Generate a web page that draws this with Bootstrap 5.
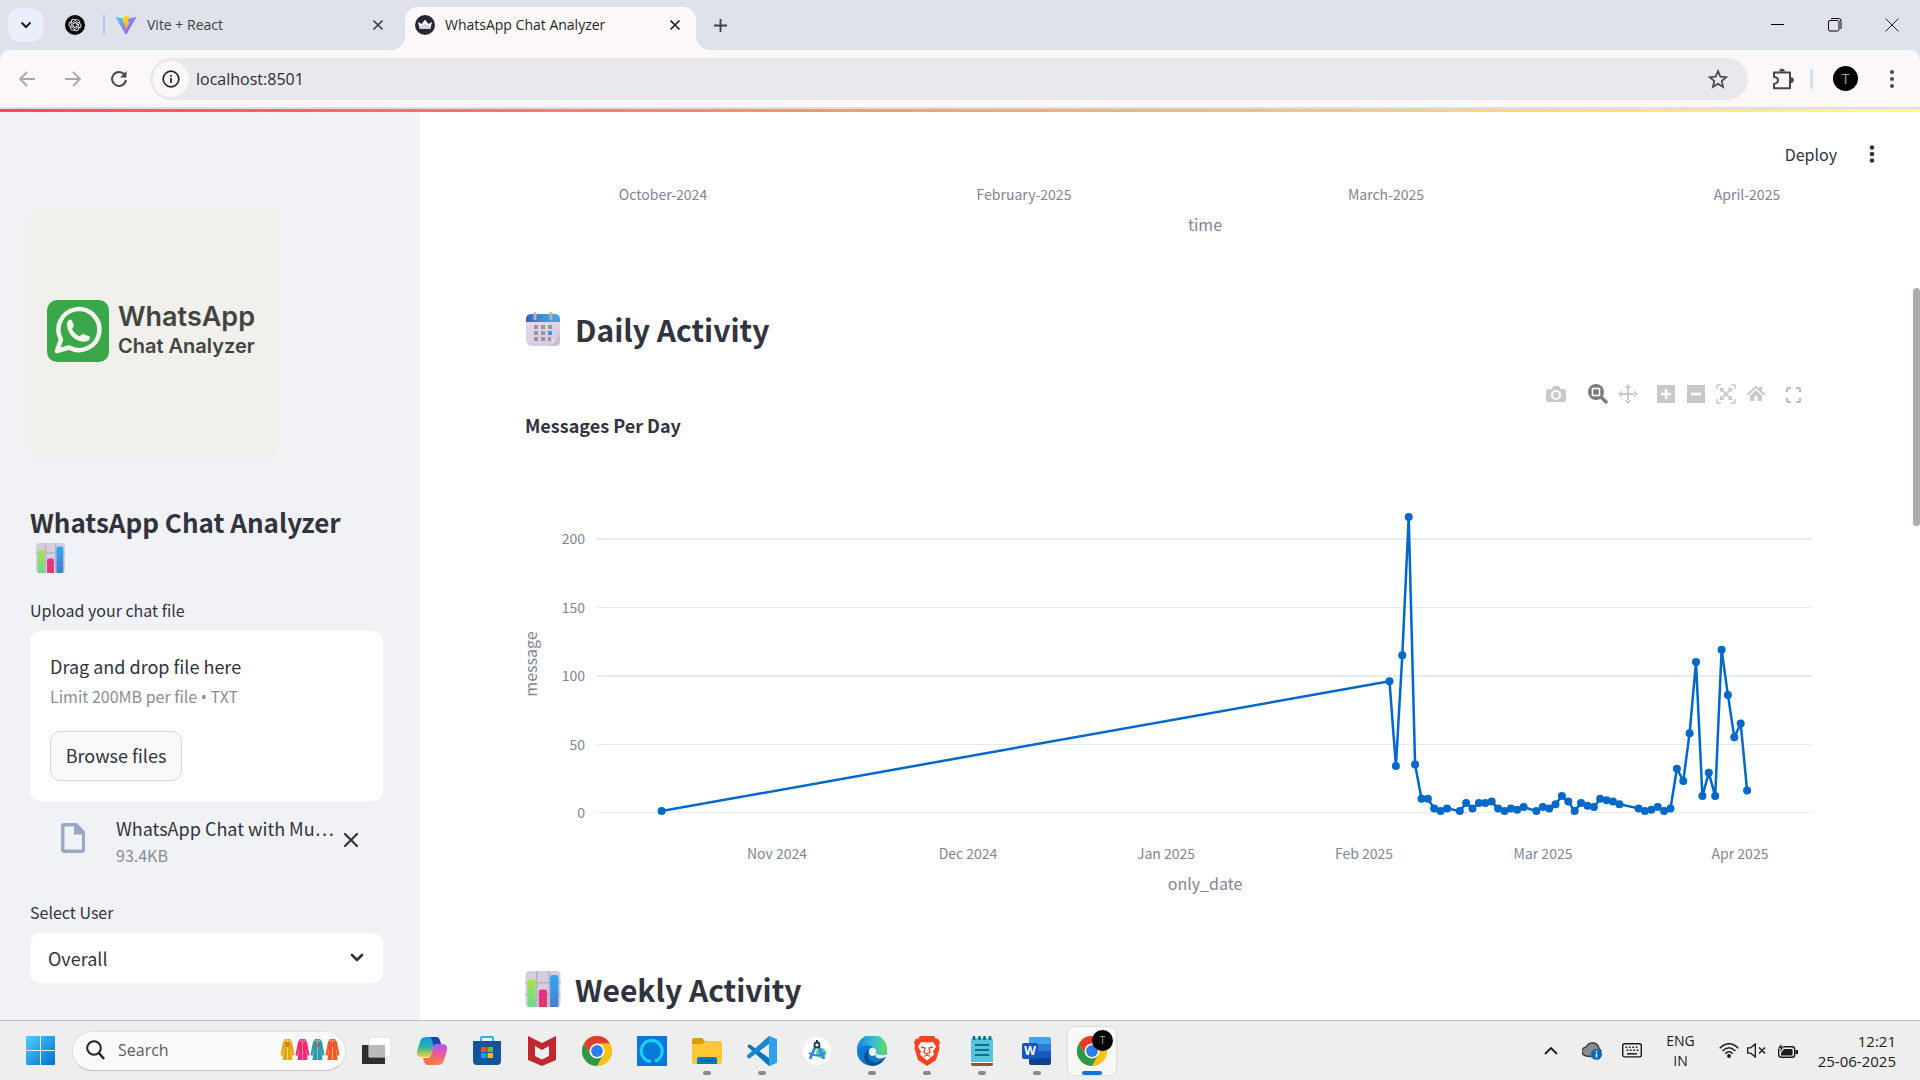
<!DOCTYPE html>
<html lang="en">
<head>
<meta charset="utf-8">
<meta name="viewport" content="width=device-width, initial-scale=1">
<title>WhatsApp Chat Analyzer</title>
<link href="https://cdn.jsdelivr.net/npm/bootstrap@5.3.0/dist/css/bootstrap.min.css" rel="stylesheet">
<style>
  :root { --ink:#31333f; --muted:#808495; --ui:"Open Sans","Noto Sans",sans-serif; --app:"Noto Sans CJK SC","Noto Sans",sans-serif; }
  body { font-family:var(--app); color:var(--ink); background:#fff; }
  svg { display:block; flex:none; }
  button { padding:0; border:0; background:none; color:inherit; }
  .tabstrip { height:50px; background:#dfe2eb; font:14px/20px var(--ui); color:#1f1f1f; padding-left:8px; }
  .tab-menu { width:35px; height:34px; border-radius:12px; background:#ebeffd; }
  .pin { margin-left:22px; }
  .tab-rule { width:2px; height:20px; background:#b6c6ea; margin:0 10px 0 18px; }
  .idle-tab { width:269px; color:#3c4043; margin-right:21px; gap:10px; }
  .live-tab { width:291px; height:43px; margin-top:7px; background:#fcf8fa; border-radius:13px 13px 0 0; padding:0 15px 7px 10px; position:relative; gap:10px; }
  .live-tab::before, .live-tab::after { content:""; position:absolute; bottom:0; width:14px; height:14px; }
  .live-tab::before { left:-14px; background:radial-gradient(circle at 0 0,transparent 14px,#fcf8fa 14px); }
  .live-tab::after { right:-14px; background:radial-gradient(circle at 100% 0,transparent 14px,#fcf8fa 14px); }
  .new-tab { margin-left:18px; }
  .win-ctl { gap:43px; padding-right:21px; }
  .toolbar-wrap { background:#dfe2eb; }
  .tools { height:57px; background:#fcf8fa; border-radius:10px 10px 0 0; padding:0 18px; color:#45474a; }
  .tool-rule { width:3px; height:20px; background:#d3e0fb; border-radius:2px; }
  .omnibox { height:42px; border-radius:21px; background:#e9e8ed; padding:0 20px 0 3px; gap:5px; margin-left:22px; }
  .omnibox input { border:0; background:none; outline:0; font:16px/24px var(--ui); color:#2b2c2f; min-width:0; }
  .site-info { width:36px; height:36px; border-radius:50%; background:#fcf8fa; }
  .avatar-dot { width:25px; height:25px; border-radius:50%; background:#000; color:#b5a27c; font:14px/25px var(--ui); text-align:center; }
  .chrome-edge { height:2px; background:#dedde1; }
  .decoration { height:3px; background:linear-gradient(90deg,#ff4b4b,#fffd80); }
  .side { width:420px; background:#f0f2f6; padding:97px 37px 0 30px; }
  .logo-card { width:250px; height:250px; border-radius:10px; background:#f1f0ec; }
  .logo-card text { font-family:Inter,sans-serif; font-weight:600; fill:#42443f; }
  .side-title { font-size:26px; line-height:36px; font-weight:600; margin:45px 0 25px; }
  .side-title svg { margin:3px 0 0 6px; }
  .field-label { font-size:16px; line-height:24px; margin-bottom:9px; display:block; }
  .drop { background:#fff; border-radius:10px; padding:19px 20px 20px; }
  .t-main { font-size:18px; line-height:32px; }
  .t-sub { font-size:16px; line-height:28px; color:#8b8c94; }
  .bullet { font-family:"Noto Sans",sans-serif; }
  .browse { width:132px; height:50px; border:1px solid #d3d4d9; border-radius:10px; background:#f9f9fb; font-size:18px; line-height:26px; padding-bottom:2px; margin-top:20px; }
  .file-row { padding:14px 24px 0 30px; margin-bottom:31px; gap:8px; }
  .file-row .file-text { padding-left:22px; min-width:0; }
  .file-row .t-main, .file-row .t-sub { line-height:27px; }
  .user-select { height:50px; border:0; border-radius:10px; font-size:18px; line-height:28px; padding:0 48px 1px 18px; color:var(--ink); background-color:#fff; background-size:16px 16px; background-position:right 18px center;
    background-image:url("data:image/svg+xml,%3csvg xmlns='http://www.w3.org/2000/svg' viewBox='0 0 16 16'%3e%3cpath fill='none' stroke='%2331333F' stroke-width='2.6' stroke-linecap='round' stroke-linejoin='round' d='m3 5 5 5 5-5'/%3e%3c/svg%3e"); }
  .page-main { padding:0 105px; background:#fff; }
  .app-head { height:70px; padding-top:13px; margin-right:-65px; font-size:16px; gap:27px; }
  .chart { width:100%; height:auto; overflow:visible; }
  .chart text { font-family:var(--app); fill:var(--muted); font-size:14px; }
  .chart .axis-name { font-size:16px; }
  .sect { font-size:30px; line-height:40px; font-weight:600; gap:14px; margin:37px 0 35px; }
  .sect.next { margin-top:59px; }
  .modebar { gap:10px; padding-right:13px; color:#c9c9c9; }
  .chart-title { font-size:18px; line-height:24px; font-weight:700; margin:9px 0 43px; }
  .thumb { position:absolute; right:0; top:176px; width:7px; height:238px; border-radius:4px; background:#acadb3; }
  .taskbar { height:60px; border-top:1px solid #bcbdbe; background:#eee; font:14px/20px var(--ui); color:#1b1b1b; padding:0 24px 0 26px; }
  .task-search { width:274px; height:40px; border-radius:20px; background:#fafafa; border:1px solid #e0e0e0; border-bottom-color:#c4c4c4; margin-left:17px; padding:0 5px 2px 13px; gap:11px; }
  .task-search input { border:0; background:none; outline:0; font:16px/20px var(--ui); color:#5c5c5c; min-width:0; }
  .task-search input::placeholder { color:#5c5c5c; opacity:1; }
  .apps { margin-left:7px; gap:7px; }
  .app-btn { width:48px; height:48px; border-radius:6px; position:relative; display:flex; align-items:center; justify-content:center; }
  .app-btn.run::after { content:""; position:absolute; left:20px; bottom:0; width:8px; height:4px; border-radius:2px; background:#8a8a8a; }
  .app-btn.now { background:#f8f8f8; box-shadow:0 0 2px #bbb; }
  .app-btn.now::after { left:14px; width:20px; background:#0c78d4; }
  .app-btn .avatar-dot { position:absolute; right:3px; top:3px; width:21px; height:21px; font-size:10px; line-height:20px; }
  .tray { gap:20px; }
  .clock { font-size:15px; }
</style>
<script src="https://cdn.jsdelivr.net/npm/bootstrap@5.3.0/dist/js/bootstrap.bundle.min.js"></script>
</head>
<body class="d-flex flex-column vh-100 overflow-hidden">

<svg width="0" height="0" class="position-absolute" aria-hidden="true">
  <defs>
    <linearGradient id="gGreen" x2="0" y2="1"><stop stop-color="#a9e34b"/><stop offset="1" stop-color="#6ad98d"/></linearGradient>
    <linearGradient id="gPink" x2="0" y2="1"><stop stop-color="#e9308c"/><stop offset="1" stop-color="#dc3a63"/></linearGradient>
    <linearGradient id="gBlue" x2="0" y2="1"><stop stop-color="#35a7f5"/><stop offset="1" stop-color="#437fce"/></linearGradient>
    <linearGradient id="gCal"><stop stop-color="#3c5fc4"/><stop offset=".5" stop-color="#3c94dc"/><stop offset="1" stop-color="#4da3e2"/></linearGradient>
    <linearGradient id="gPaper" x2=".4" y2="1"><stop stop-color="#e6dfec"/><stop offset="1" stop-color="#d6cbe0"/></linearGradient>
    <symbol id="bars" viewBox="0 0 34 35">
      <rect width="34" height="35" rx="4" fill="#d5cedd"/>
      <path d="M11 0v35M23 0v35M0 11.500h34M0 23h34" stroke="#b9b0c3" stroke-width="1.500"/>
      <path d="M2 35V10q0-2 2-2h4q2 0 2 2v25z" fill="url(#gGreen)"/>
      <path d="M13 35V20q0-2 2-2h4q2 0 2 2v15z" fill="url(#gPink)"/>
      <path d="M24 35V6q0-2 2-2h4q2 0 2 2v29z" fill="url(#gBlue)"/>
    </symbol>
    <symbol id="chromeLogo" viewBox="0 0 30 30">
      <circle cx="15" cy="15" r="15" fill="#fbc116"/>
      <path d="M2 7.500A15 15 0 0 1 28 7.500L15 8 8.500 18.800z" fill="#e33b2e"/>
      <path d="M2 7.500A15 15 0 0 0 15 30l6.500-11.200L15 22 8.500 18.700z" fill="#2a9a48"/>
      <path d="M15 7.500h13A15 15 0 0 1 15 30l6.500-11.200z" fill="#fbc116"/>
      <circle cx="15" cy="15" r="7.500" fill="#fff"/><circle cx="15" cy="15" r="5.900" fill="#2f7de9"/>
    </symbol>
    <symbol id="cross" viewBox="0 0 12 12"><path d="m1.500 1.500 9 9m0-9-9 9" stroke="currentColor" stroke-width="1.700" fill="none"/></symbol>
    <symbol id="robe" viewBox="0 0 15 22"><path d="M5 0h5l2 3 2.500 13-2 1L11 9l1.500 12h-10L4 9l-1.500 8-2-1L3 3z"/><path d="M7.500 0v21M5 1l2.500 4L10 1" stroke="#fff" stroke-opacity=".45" fill="none"/><path d="M5.500 3h4l-1 5h-2z" fill="#e8443a" fill-opacity=".7"/></symbol>
  </defs>
</svg>

<header>
  <div class="tabstrip d-flex align-items-center">
    <button class="tab-menu d-flex align-items-center justify-content-center" aria-label="Search tabs"><svg width="12" height="8" viewBox="0 0 12 8"><path d="m1.500 1.500 4.500 4.500 4.500-4.500" fill="none" stroke="#1f1f1f" stroke-width="2"/></svg></button>
    <svg class="pin" width="20" height="20" viewBox="0 0 20 20"><circle cx="10" cy="10" r="10" fill="#000"/><g fill="none" stroke="#fff" stroke-width=".9"><path id="petal" d="M8 11.200V6.800l3-1.700a2.400 2.400 0 0 1 3.400 3.200"/><use href="#petal" transform="rotate(60 10 10)"/><use href="#petal" transform="rotate(120 10 10)"/><use href="#petal" transform="rotate(180 10 10)"/><use href="#petal" transform="rotate(240 10 10)"/><use href="#petal" transform="rotate(300 10 10)"/></g></svg>
    <span class="tab-rule"></span>
    <div class="idle-tab d-flex align-items-center">
      <svg width="22" height="20" viewBox="0 0 22 20"><defs><linearGradient id="v1" x2="1" y2="1"><stop stop-color="#41d1ff"/><stop offset="1" stop-color="#bd34fe"/></linearGradient><linearGradient id="v2" x2="0" y2="1"><stop stop-color="#ffdd35"/><stop offset="1" stop-color="#ffa800"/></linearGradient></defs><path d="M.5 2 11 20 21.500 2 11 4z" fill="url(#v1)"/><path d="M14.500.3 8.200 1.500 7.800 8.700l2.300-.4-.6 3.200 1.700-.5-1.300 5.500 5.300-9.500-2.600.4z" fill="url(#v2)"/></svg>
      <span class="flex-grow-1">Vite + React</span>
      <button aria-label="Close tab"><svg width="12" height="12"><use href="#cross"/></svg></button>
    </div>
    <div class="live-tab d-flex align-items-center">
      <svg width="20" height="20" viewBox="0 0 20 20"><circle cx="10" cy="10" r="10" fill="#262730"/><path d="m3 7 3.600 2L10 4.700 13.400 9 17 7l-1.800 7H4.800z" fill="#fff"/><path d="M4.400 12 10 8.500l5.600 3.500-.4 2H4.800z" fill="#d4d4d6"/></svg>
      <span class="flex-grow-1">WhatsApp Chat Analyzer</span>
      <button aria-label="Close tab"><svg width="12" height="12"><use href="#cross"/></svg></button>
    </div>
    <button class="new-tab" aria-label="New tab"><svg width="13" height="13" viewBox="0 0 13 13"><path d="M6.500 0v13M0 6.500h13" stroke="#3c4043" stroke-width="1.800"/></svg></button>
    <div class="win-ctl ms-auto d-flex align-items-center">
      <button aria-label="Minimize"><svg width="14" height="14"><path d="M0 6.500h13" stroke="#000"/></svg></button>
      <button aria-label="Restore"><svg width="14" height="14" fill="none" stroke="#000"><rect x=".5" y="2.500" width="10.500" height="10.500" rx="1.500"/><path d="M3 .5h7.500q2.500 0 2.500 2.500v8"/></svg></button>
      <button aria-label="Close"><svg width="14" height="14"><path d="m.5.5 13 13m0-13-13 13" stroke="#222"/></svg></button>
    </div>
  </div>
  <div class="toolbar-wrap">
    <div class="tools d-flex align-items-center">
      <button aria-label="Back"><svg width="18" height="16" viewBox="0 0 18 16" fill="none" stroke="#a9a8ab" stroke-width="1.800"><path d="M17 8H2M9 1 2 8l7 7"/></svg></button>
      <button class="ms-4" aria-label="Forward"><svg class="ms-1" width="18" height="16" viewBox="0 0 18 16" fill="none" stroke="#a9a8ab" stroke-width="1.800"><path d="M1 8h15M9 1l7 7-7 7"/></svg></button>
      <button class="ms-4" aria-label="Reload"><svg class="ms-1" width="18" height="18" viewBox="0 0 18 18"><path d="M14.500 4.500A7 7 0 1 0 16 10" fill="none" stroke="#45474a" stroke-width="2"/><path d="M16.500 1v6.500H10z" fill="#45474a"/></svg></button>
      <div class="omnibox flex-grow-1 d-flex align-items-center">
        <button class="site-info d-flex align-items-center justify-content-center" aria-label="Site information"><svg width="18" height="18" viewBox="0 0 18 18" fill="none" stroke="#202124" stroke-width="1.700"><circle cx="9" cy="9" r="7.800"/><path d="M9 8v5M9 5v1.700"/></svg></button>
        <input class="flex-grow-1" type="text" value="localhost:8501" aria-label="Address">
        <button aria-label="Bookmark"><svg width="20" height="20" viewBox="0 0 20 20"><path d="m10 2 2.300 5.600 6 .5-4.600 3.900 1.400 5.900L10 14.800l-5.100 3.100 1.400-5.900-4.600-3.900 6-.5z" fill="none" stroke="#45474a" stroke-width="1.700"/></svg></button>
      </div>
      <button class="ms-4" aria-label="Extensions"><svg width="22" height="22" viewBox="0 0 22 22"><path d="M2 4.500h16v15.800H2v-4.500q4-.5 4-3.500T2 9z" fill="none" stroke="#45474a" stroke-width="2" stroke-linejoin="round"/><path d="M7.200 3.500a2.800 2.800 0 0 1 5.600 0zM19 9.300a2.800 2.800 0 0 1 0 5.600z" fill="#45474a"/></svg></button>
      <span class="tool-rule ms-3 me-3"></span>
      <button class="avatar-dot ms-1" aria-label="Profile">T</button>
      <button class="ms-4" aria-label="Menu"><svg width="20" height="20" fill="#45474a"><circle cx="10" cy="3" r="2"/><circle cx="10" cy="10" r="2"/><circle cx="10" cy="17" r="2"/></svg></button>
    </div>
    <div class="chrome-edge"></div>
  </div>
  <div class="decoration"></div>
</header>

<div class="d-flex flex-grow-1 overflow-hidden position-relative">
  <aside class="side flex-shrink-0">
    <div class="logo-card">
      <svg width="250" height="250" viewBox="0 0 250 250">
        <rect x="17" y="91" width="62" height="62" rx="10" fill="#3ba74b"/>
        <path d="m27 142 4-11.500a20.500 20.500 0 1 1 8 8z" fill="none" stroke="#f5f4ec" stroke-width="4.500" stroke-linejoin="round"/>
        <path d="M37 114q1-4 4.500-3.200L44 116.500l-2 3.500q2.500 5 7.500 7.200l3.500-2.500 7 3q.5 4.500-6 5-8-.5-13-6.500-4.500-6-4-12.200z" fill="#f5f4ec"/>
        <text x="88" y="117" font-size="27">WhatsApp</text>
        <text x="88" y="144" font-size="20">Chat Analyzer</text>
      </svg>
    </div>
    <h1 class="side-title">WhatsApp Chat Analyzer <svg width="29" height="30"><use href="#bars"/></svg></h1>
    <label class="field-label" for="chatFile">Upload your chat file</label>
    <div class="drop">
      <div class="t-main">Drag and drop file here</div>
      <div class="t-sub">Limit 200MB per file <span class="bullet">•</span> TXT</div>
      <input type="file" id="chatFile" class="d-none" accept=".txt">
      <button class="browse">Browse files</button>
    </div>
    <div class="file-row d-flex align-items-center">
      <svg class="mb-2" width="26" height="32" viewBox="0 0 26 32"><path d="M4 1h13l8 8.500V28q0 3-3 3H4q-3 0-3-3V4q0-3 3-3z" fill="#9aa8c7"/><path d="M4.500 4.500H14v8h8v15H4.500z" fill="#f0f2f6"/></svg>
      <div class="file-text flex-grow-1">
        <div class="t-main text-nowrap">WhatsApp Chat with Mu…</div>
        <div class="t-sub">93.4KB</div>
      </div>
      <button class="mb-1" aria-label="Remove file"><svg width="16" height="16" viewBox="0 0 16 16"><path d="m2 2 12 12m0-12L2 14" stroke="#31333f" stroke-width="2.200" stroke-linecap="round"/></svg></button>
    </div>
    <label class="field-label" for="userPick">Select User</label>
    <select id="userPick" class="form-select user-select"><option>Overall</option></select>
  </aside>

  <main class="page-main flex-grow-1 overflow-hidden">
    <div class="app-head d-flex align-items-center justify-content-end">
      <button>Deploy</button>
      <button aria-label="App menu"><svg width="16" height="18" fill="#31333f"><circle cx="8" cy="2.500" r="2.300"/><circle cx="8" cy="9" r="2.300"/><circle cx="8" cy="15.500" r="2.300"/></svg></button>
    </div>
    <svg class="chart" viewBox="0 0 1290 90" text-anchor="middle">
      <text x="138" y="18">October-2024</text><text x="499" y="18">February-2025</text><text x="861" y="18">March-2025</text><text x="1222" y="18">April-2025</text>
      <text class="axis-name" x="680" y="49">time</text>
    </svg>
    <h2 class="sect d-flex align-items-center">
      <svg width="36" height="36" viewBox="0 0 36 36"><rect x="1" y="3" width="34" height="32" rx="6" fill="url(#gPaper)"/><path d="M1 11V8q0-5 6-5h22q6 0 6 5v3z" fill="url(#gCal)"/><g fill="#9a94a5"><path d="M9 14h4v4H9zM16 14h4v4h-4zM23 14h4v4h-4zM9 20h4v4H9zM16 20h4v4h-4zM9 26h4v4H9zM16 26h4v4h-4zM23 26h3v4h-3z"/></g><path d="M23 20h4v4h-4z" fill="#3f94e5"/><path d="M35 22 23 35h8q4 0 4-4z" fill="#c9bfd3"/><path d="M35 23q-2 5-7 5l-3 7z" fill="#eee8f1"/><path d="M10 2.500v5M26 2.500v5" stroke="#b4b2b8" stroke-width="3" stroke-linecap="round"/></svg>
      Daily Activity
    </h2>
    <div class="modebar d-flex justify-content-end align-items-center">
      <button class="me-2 pe-1" aria-label="Download plot"><svg width="20" height="20" viewBox="0 0 20 20"><path d="M2 5h4l1.500-3h5.500L14.500 5H18q2 0 2 2v9q0 2-2 2H2q-2 0-2-2V7q0-2 2-2z" fill="#c9c9c9"/><circle cx="10" cy="11" r="4" fill="none" stroke="#fff" stroke-width="2"/></svg></button>
      <button aria-label="Zoom"><svg width="20" height="20" viewBox="0 0 20 20"><path d="m13 13 6 6" stroke="#7c7c7c" stroke-width="3.500"/><circle cx="8" cy="8" r="8" fill="#7c7c7c"/><path d="M4.500 4.500h7v7h-7z" fill="none" stroke="#fff" stroke-width="1.500"/></svg></button>
      <button class="me-2" aria-label="Pan"><svg width="20" height="20" viewBox="0 0 20 20" fill="#c9c9c9"><path d="M9 3h2v14H9zM3 9h14v2H3zM10 0l3.500 4h-7zM10 20l3.500-4h-7zM0 10l4-3.500v7zM20 10l-4-3.500v7z"/></svg></button>
      <button aria-label="Zoom in"><svg width="20" height="20" viewBox="0 0 20 20"><path d="M1 1h18v18H1z" fill="#c9c9c9"/><path d="M10 5v10M5 10h10" stroke="#fff" stroke-width="2.500"/></svg></button>
      <button aria-label="Zoom out"><svg width="20" height="20" viewBox="0 0 20 20"><path d="M1 1h18v18H1z" fill="#c9c9c9"/><path d="M5 10h10" stroke="#fff" stroke-width="2.500"/></svg></button>
      <button aria-label="Autoscale"><svg width="20" height="20" viewBox="0 0 20 20"><g fill="none" stroke="#c9c9c9" stroke-width="1.500"><path d="M1 5V1h4M15 1h4v4M19 15v4h-4M5 19H1v-4"/><path d="m5 5 10 10M15 5 5 15" stroke-width="2"/></g><path d="M4 4h4.500L4 8.500zM16 4v4.500L11.500 4zM4 16v-4.500L8.500 16zM16 16h-4.500l4.500-4.500z" fill="#c9c9c9"/></svg></button>
      <button class="me-2" aria-label="Reset axes"><svg width="20" height="20" viewBox="0 0 20 20"><path d="m1 11 9-8 9 8" fill="none" stroke="#c9c9c9" stroke-width="2"/><path d="M13 3h3v5l-3-3zM4 11.500 10 6l6 5.500V17h-4.500v-5h-3v5H4z" fill="#c9c9c9"/></svg></button>
      <button aria-label="Fullscreen"><svg width="18" height="20" viewBox="0 0 18 20"><path d="M3 8V5q0-1 1-1h3M12 4h3q1 0 1 1v3M16 14v3q0 1-1 1h-3M7 18H4q-1 0-1-1v-3" fill="none" stroke="#bdbdbd" stroke-width="2.200"/></svg></button>
    </div>
    <h3 class="chart-title">Messages Per Day</h3>
    <svg class="chart" viewBox="0 0 1290 430" role="img" aria-label="Messages per day">
      <g stroke="#e6eaf1"><path d="M71 59h1216M71 196h1216" stroke-width="2"/><path d="M71 127.500h1216M71 264.500h1216M71 332.500h1216"/></g>
      <g text-anchor="end"><text x="60" y="64">200</text><text x="60" y="133">150</text><text x="60" y="201">100</text><text x="60" y="270">50</text><text x="60" y="338">0</text></g>
      <g text-anchor="middle">
        <text x="252" y="379">Nov 2024</text><text x="443" y="379">Dec 2024</text><text x="641" y="379">Jan 2025</text><text x="839" y="379">Feb 2025</text><text x="1018" y="379">Mar 2025</text><text x="1215" y="379">Apr 2025</text>
        <text class="axis-name" x="680" y="410">only_date</text>
        <text class="axis-name" transform="translate(12 184) rotate(-90)">message</text>
      </g>
      <g id="series" fill="#0068c9"></g>
    </svg>
    <h2 class="sect next d-flex align-items-center"><svg width="36" height="36"><use href="#bars"/></svg>Weekly Activity</h2>
  </main>
  <div class="thumb"></div>
</div>

<footer class="taskbar d-flex align-items-center flex-shrink-0">
  <button aria-label="Start"><svg width="29" height="29" viewBox="0 0 29 29"><defs><linearGradient id="win" x2="1" y2="1" ><stop stop-color="#50cdfc"/><stop offset="1" stop-color="#0070d2"/></linearGradient></defs><path d="M1 0h13v14H0V1q0-1 1-1zM15 0h13q1 0 1 1v13H15zM0 15h14v14H1q-1 0-1-1zM15 15h14v13q0 1-1 1H15z" fill="url(#win)"/></svg></button>
  <label class="task-search d-flex align-items-center">
    <svg width="19" height="20" viewBox="0 0 19 20" fill="none" stroke="#222" stroke-width="2"><circle cx="8" cy="8" r="6.800"/><path d="m13 13 5 6" stroke-width="2.500"/></svg>
    <input class="flex-grow-1" type="search" placeholder="Search" aria-label="Search">
    <span class="d-flex"><svg width="15" height="22" fill="#e0a913"><use href="#robe"/></svg><svg width="15" height="22" fill="#ef2a7b"><use href="#robe"/></svg><svg width="15" height="22" fill="#2a9aa6"><use href="#robe"/></svg><svg width="15" height="22" fill="#ee5a24"><use href="#robe"/></svg></span>
  </label>
  <nav class="apps d-flex align-items-center">
    <button class="app-btn" aria-label="Task view"><svg width="30" height="30"><path d="M0 9h23v19H0z" fill="#2e2e2e"/><path d="M7 1h22v20H7z" fill="#fbfbfb" stroke="#e2e2e2"/><path d="M7 9h16v12H7z" fill="#b9b9b9"/></svg></button>
    <button class="app-btn" aria-label="Copilot"><svg width="30" height="28" viewBox="0 0 30 28"><defs><linearGradient id="c1" x2="0" y2="1"><stop stop-color="#1595ee"/><stop offset=".5" stop-color="#29b3a1"/><stop offset="1" stop-color="#f8cf2f"/></linearGradient><linearGradient id="c2" x2="0" y2="1"><stop stop-color="#a85cf0"/><stop offset=".5" stop-color="#ee5a9a"/><stop offset="1" stop-color="#fb8a3c"/></linearGradient></defs><path d="M9 0h10q3 0 4 4l1 3h-5q-2 0-3 3l-2 7q-1 3-4 3H5q-6 0-5-6L3 5q1-5 6-5z" fill="url(#c1)"/><path d="M13 0h6q3 0 4 4l1 3h-5l-3 2q0-7-3-9z" fill="#1442b8"/><path d="M21 28H11q-3 0-4-4l-1-3h5q2 0 3-3l2-8q1-3 4-3h5q6 0 5 6l-3 10q-1 5-6 5z" fill="url(#c2)"/><path d="M17 28h-6q-3 0-4-4l-1-3h5q2 0 3-3l2-5z" fill="#fb7043" opacity=".8"/></svg></button>
    <button class="app-btn" aria-label="Store"><svg width="30" height="30"><path d="M9 6V2q0-1 1-1h10q1 0 1 1v4" fill="none" stroke="#27b4f2" stroke-width="2"/><path d="M1 5h28v20q0 4-4 4H5q-4 0-4-4z" fill="#15549a"/><path d="M9 11h5.500v5H9z" fill="#f25022"/><path d="M15.500 11H21v5h-5.500z" fill="#7fba00"/><path d="M9 17h5.500v5H9z" fill="#00a4ef"/><path d="M15.500 17H21v5h-5.500z" fill="#ffb900"/></svg></button>
    <button class="app-btn" aria-label="McAfee"><svg width="28" height="30"><path d="m0 0 14 7L28 0v24l-14 6-14-6zM7 10v10l7 3.500 7-3.500V10l-7 4z" fill="#c1272f" fill-rule="evenodd"/></svg></button>
    <button class="app-btn" aria-label="Chrome"><svg width="30" height="30"><use href="#chromeLogo"/></svg></button>
    <button class="app-btn" aria-label="Alexa"><svg width="30" height="30"><path d="M0 0h30v30H0z" fill="#0879d9"/><path d="M14 25.500a10.500 10.500 0 1 1 4-.5" fill="none" stroke="#1ad0ff" stroke-width="3"/></svg></button>
    <button class="app-btn run" aria-label="File Explorer"><svg width="30" height="30"><path d="M0 4q0-2 2-2h8l3 3h15v8H0z" fill="#dd9a09"/><path d="M0 8h10l3-3h15q2 0 2 2v19q0 2-2 2H2q-2 0-2-2z" fill="#fcc934"/><path d="M5 28v-5q0-2 2-2h16q2 0 2 2v5z" fill="#1173c5"/><path d="M9 24.500h12" stroke="#0b4f92"/></svg></button>
    <button class="app-btn run" aria-label="VS Code"><svg width="30" height="30"><path d="m22 0 8 3.500v23L22 30 2 12q-3-2 0-3.500h1L22 22z" fill="#0b76c2"/><path d="M22 8 3 22q-1 1-2 0-2-2 0-3.500L22 0z" fill="#1c86cf"/><path d="m22 0 8 3.500v23L22 30z" fill="#2da3f0"/></svg></button>
    <button class="app-btn" aria-label="Android Studio"><svg width="30" height="30"><circle cx="15" cy="15" r="14" fill="#fff"/><circle cx="19" cy="17" r="5" fill="#3ddc84"/><path d="m14 9-6 14M16 9l6 14" stroke="#4285f4" stroke-width="3"/><path d="M7 17q8 5 16 0" fill="none" stroke="#3f7be8" stroke-width="2"/><circle cx="15" cy="9" r="2.500" fill="#fff" stroke="#1c3a4d" stroke-width="1.800"/><path d="M15 4v3" stroke="#1c3a4d" stroke-width="2"/></svg></button>
    <button class="app-btn run" aria-label="Edge"><svg width="30" height="30"><defs><linearGradient id="e1"><stop stop-color="#1d86d8"/><stop offset=".55" stop-color="#32bfdc"/><stop offset="1" stop-color="#63de4e"/></linearGradient></defs><circle cx="15" cy="15" r="15" fill="#0f7ad0"/><path d="M0 14A15 15 0 0 1 30 13q0 7-7 7-5 0-4-2 1-3-1-5Q9 5 0 14z" fill="url(#e1)"/><path d="M12 13q-4 9 4 13 6 1 12-4-5 8-13 8-7-2-8-8 0-6 5-9z" fill="#0b4d91"/><path d="M20 18q-2 2-1 3 3 3 9 0l3-1v-3q-5 4-11 1z" fill="#eee"/><path d="M17 12q-5-1-5 4 0 3 3 4l5-1q-2-1-1-3 1-2-2-4z" fill="#eee"/></svg></button>
    <button class="app-btn run" aria-label="Brave"><svg width="26" height="30"><path d="m6 0h14l2 3 2-.5 2 4-1 3 .5 3L22 24l-9 6-9-6L.5 12.500l.5-3-1-3 2-4L4 3z" fill="#fb4320"/><path d="m7 6 6 .5L19 6l3 4.500-3 5 1 3-7 6-7-6 1-3-3-5z" fill="#fff"/><path d="m7 11 4 1-1 4.500 3 1.500 3-1.500-1-4.500 4-1M10 20.500l3-1.500 3 1.500" fill="none" stroke="#fb4320" stroke-width="1.300"/></svg></button>
    <button class="app-btn run" aria-label="Notepad"><svg width="22" height="30"><path d="M0 26h22v2q0 2-2 2H2q-2 0-2-2z" fill="#a04f16"/><path d="M2 2h18q2 0 2 2v22H0V4q0-2 2-2z" fill="#58c3d8"/><path d="M0 26.500h22" stroke="#fff"/><path d="M4 9h14M4 14h14M4 19h14" stroke="#0b6f8f" stroke-width="2"/><path d="M3 0v4M8.500 0v4M13.500 0v4M19 0v4" stroke="#12687f" stroke-width="2.500"/></svg></button>
    <button class="app-btn run" aria-label="Word"><svg width="30" height="28"><path d="M7 0h20q2 0 2 2v5H7z" fill="#41a5ee"/><path d="M7 7h22v7H7z" fill="#2b7cd3"/><path d="M7 14h22v7H7z" fill="#185abd"/><path d="M7 21h22v5q0 2-2 2H9q-2 0-2-2z" fill="#103f91"/><rect y="6" width="16" height="16" rx="2" fill="#1857b8"/><text x="8" y="18" font-size="12" font-weight="700" fill="#fff" text-anchor="middle">W</text></svg></button>
    <button class="app-btn run now" aria-label="Chrome window"><svg width="30" height="30"><use href="#chromeLogo"/></svg><span class="avatar-dot">T</span></button>
  </nav>
  <div class="tray ms-auto d-flex align-items-center">
    <button class="me-1" aria-label="Show hidden icons"><svg width="14" height="8" viewBox="0 0 14 8"><path d="m1 7 6-6 6 6" fill="none" stroke="#1b1b1b" stroke-width="1.800"/></svg></button>
    <svg width="20" height="18" viewBox="0 0 20 18"><path d="M4 14q-4-1-4-5 0-3 4-4 3-5 8-4 4 1 5 5l2 3-6 6z" fill="#8c8c8c" stroke="#3a3a3a" stroke-width="1.300"/><circle cx="14.500" cy="12.300" r="5.500" fill="#0067c0"/><path d="M14.500 11.500v4M14.500 8.800v1.600" stroke="#fff" stroke-width="1.500"/></svg>
    <svg width="20" height="15" viewBox="0 0 20 15" fill="none" stroke="#1b1b1b"><rect x=".7" y=".7" width="18.600" height="13.200" rx="2" stroke-width="1.400"/><path d="M3.500 4.300h13M4.500 7.300h12" stroke-width="1.600" stroke-dasharray="1.700 1.700"/><path d="M5 10.800h10" stroke-width="1.500"/></svg>
    <div class="text-center ps-1">ENG<br>IN</div>
    <button class="d-flex align-items-center gap-2 ps-1" aria-label="Network, sound, battery">
      <svg width="20" height="15" viewBox="0 0 20 15" fill="none" stroke="#1b1b1b" stroke-width="1.400"><path d="M.7 5.200q9.300-9 18.600 0M3.500 8q6.500-6.500 13 0M6.200 10.700q3.800-3.800 7.600 0"/><circle cx="10" cy="13" r="1.200" fill="#1b1b1b"/></svg>
      <svg width="19" height="15" viewBox="0 0 19 15" fill="none" stroke="#1b1b1b" stroke-width="1.300"><path d="M.7 4.800h3L8.300 1v13L3.700 10.200h-3zM12 4.500l6 6m0-6-6 6"/></svg>
      <svg class="ms-1" width="20" height="16" viewBox="0 0 20 16"><rect x=".7" y="3.700" width="16" height="10.600" rx="2.500" fill="none" stroke="#1b1b1b" stroke-width="1.400"/><path d="M3 10 6 6h8.500v6.500H3zM17.500 7H20v4h-2.500z" fill="#1b1b1b"/><path d="M3.500 0 0 5.500h2.500L1.500 10 6 4H3.500z" fill="#1b1b1b" stroke="#eee" stroke-width=".5"/></svg>
    </button>
    <div class="clock text-end">12:21<br>25-06-2025</div>
  </div>
</footer>

<script>
  // [days since 1 Feb 2025, messages]
  const first = [-110, 1];
  const daily = [96,34,115,216,35,10,10,3,1,3,null,1,7,3,7,7,8,3,1,3,2,4,null,1,4,3,6,12,8,1,7,5,4,10,9,8,6,null,null,3,1,2,4,1,3,32,23,58,110,12,29,12,119,86,55,65,16];
  const data = [first, ...daily.map((v, i) => [i + 4, v]).filter(d => d[1] !== null)];
  const pts = data.map(([d, v]) => [(839 + d * 6.385).toFixed(1), (332.5 - v * 1.3675).toFixed(1)]);
  document.getElementById('series').innerHTML =
    '<polyline fill="none" stroke="#0068c9" stroke-width="2.5" points="' + pts.map(p => p.join()).join(' ') + '"/>' +
    pts.map(p => '<circle r="4" cx="' + p[0] + '" cy="' + p[1] + '"/>').join('');
</script>
</body>
</html>
